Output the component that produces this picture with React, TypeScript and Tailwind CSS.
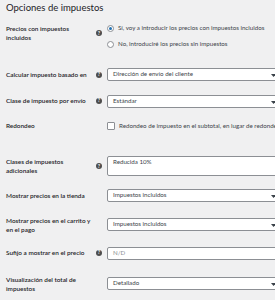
import React from "react";

function HelpTip() {
  return (
    <span className="flex h-[6px] w-[6px] shrink-0 items-center justify-center rounded-full bg-[#4d4d4d] text-[5px] font-bold leading-none text-white">
      ?
    </span>
  );
}

function Arrow() {
  return (
    <svg width="5" height="4" viewBox="0 0 5 4" className="absolute right-[3px] top-[5px]">
      <path d="M0 0 L5 0 L2.5 3 Z" fill="#3c434a" />
    </svg>
  );
}

function Select({ value }: { value: string }) {
  return (
    <div className="relative flex h-[13px] w-[173px] items-center rounded-[2px] border border-[#8c8f94] bg-white pl-[5px] text-[6.2px] leading-none text-[#3c434a]">
      {value}
      <Arrow />
    </div>
  );
}

function Row({
  label,
  help,
  rowClass,
  labelClass,
  fieldClass,
  children,
}: {
  label: string;
  help?: boolean;
  rowClass: string;
  labelClass: string;
  fieldClass: string;
  children: React.ReactNode;
}) {
  return (
    <div className={"flex items-start " + rowClass}>
      <div className={"flex w-[96px] shrink-0 items-center gap-[2px] " + labelClass}>
        <div className="w-[88px] text-[6.4px] font-semibold leading-[9px] text-[#1d2327]">{label}</div>
        {help && <HelpTip />}
      </div>
      <div className={"ml-[5px] " + fieldClass}>{children}</div>
    </div>
  );
}

export default function App() {
  return (
    <div
      className="h-[300px] w-[275px] overflow-hidden bg-[#f0f0f1] pl-[6px] text-[#1d2327]"
      style={{ fontFamily: 'Lato, "Noto Sans", sans-serif' }}
    >
      <h2 className="pt-[2px] text-[9.5px] leading-[12px] text-[#1d2327]">Opciones de impuestos</h2>

      <Row label="Precios con impuestos incluidos" help rowClass="h-[48px]" labelClass="pt-[10px]" fieldClass="pt-[9px]">
        <div className="flex flex-col gap-[6px] text-[6.2px] leading-[10px] text-[#3c434a]">
          <label className="flex items-center gap-[4px] whitespace-nowrap">
            <span className="flex h-[7px] w-[7px] items-center justify-center rounded-full border border-[#8c8f94] bg-white">
              <span className="h-[3px] w-[3px] rounded-full bg-[#2271b1]" />
            </span>
            Sí, voy a introducir los precios con impuestos incluidos
          </label>
          <label className="flex items-center gap-[4px] whitespace-nowrap">
            <span className="h-[7px] w-[7px] rounded-full border border-[#8c8f94] bg-white" />
            No, introduciré los precios sin impuestos
          </label>
        </div>
      </Row>

      <Row label="Calcular impuesto basado en" help rowClass="h-[26px]" labelClass="pt-[8px]" fieldClass="pt-[6px]">
        <Select value="Dirección de envío del cliente" />
      </Row>

      <Row label="Clase de impuesto por envío" help rowClass="h-[25px]" labelClass="pt-[8px]" fieldClass="pt-[7px]">
        <Select value="Estándar" />
      </Row>

      <Row label="Redondeo" rowClass="h-[36px]" labelClass="pt-[8px]" fieldClass="pt-[9px]">
        <label className="flex items-center gap-[4px] whitespace-nowrap text-[6.2px] leading-[8px] text-[#3c434a]">
          <span className="h-[8px] w-[8px] shrink-0 rounded-[1px] border border-[#8c8f94] bg-white" />
          Redondeo de impuesto en el subtotal, en lugar de redondear por cada línea
        </label>
      </Row>

      <Row label="Clases de impuestos adicionales" help rowClass="h-[34px]" labelClass="pt-[8px]" fieldClass="pt-[7px]">
        <div className="h-[20px] w-[173px] rounded-[2px] border border-[#8c8f94] bg-white px-[5px] pt-[1px] text-[6.2px] leading-[8px] text-[#3c434a]">
          Reducida 10%
        </div>
      </Row>

      <Row label="Mostrar precios en la tienda" rowClass="h-[28px]" labelClass="pt-[8px]" fieldClass="pt-[6px]">
        <Select value="Impuestos incluidos" />
      </Row>

      <Row label="Mostrar precios en el carrito y en el pago" rowClass="h-[29px]" labelClass="pt-[5px]" fieldClass="pt-[7px]">
        <Select value="Impuestos incluidos" />
      </Row>

      <Row label="Sufijo a mostrar en el precio" help rowClass="h-[30px]" labelClass="pt-[8px]" fieldClass="pt-[7px]">
        <div className="flex h-[13px] w-[173px] items-center rounded-[2px] border border-[#8c8f94] bg-white pl-[5px] text-[6.2px] leading-none text-[#8c8f94]">
          N/D
        </div>
      </Row>

      <Row label="Visualización del total de impuestos" rowClass="h-[30px]" labelClass="pt-[5px]" fieldClass="pt-[7px]">
        <Select value="Detallado" />
      </Row>
    </div>
  );
}
